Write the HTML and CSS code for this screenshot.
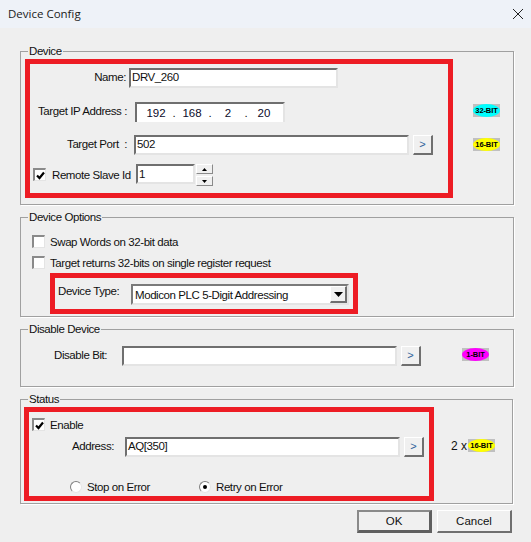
FILE: index.html
```html
<!DOCTYPE html>
<html lang="en">
<head>
<meta charset="utf-8">
<title>Device Config</title>
<link rel="stylesheet" href="styles.css">
</head>
<body>
<div class="dialog">
  <header class="titlebar">
    <span class="title">Device Config</span>
    <svg class="close" width="12" height="12" viewBox="0 0 12 12"><path d="M1 1L11 11M11 1L1 11" stroke="#222" stroke-width="1" fill="none"/></svg>
  </header>
  <main class="content">
    <section class="group group-device">
      <span class="legend">Device</span>
      <div class="row row-name">
        <span class="label label-name">Name:</span>
        <div class="field field-name">DRV_260</div>
      </div>
      <div class="row row-ip">
        <span class="label label-ip">Target IP Address :</span>
        <div class="ip">
          <span class="octet">192</span><span class="dot">.</span>
          <span class="octet">168</span><span class="dot">.</span>
          <span class="octet">2</span><span class="dot">.</span>
          <span class="octet">20</span>
        </div>
        <div class="badge badge-cyan badge-ip"><span class="oval">32-BIT</span></div>
      </div>
      <div class="row row-port">
        <span class="label label-port">Target Port &nbsp;:</span>
        <div class="field field-port">502</div>
        <div class="btn-small">&gt;</div>
        <div class="badge badge-yellow badge-port"><span class="oval">16-BIT</span></div>
      </div>
      <div class="row row-slave">
        <span class="check is-checked"><svg width="9" height="9" viewBox="0 0 9 9"><path d="M1 4.5L3.5 7L8 1.5" stroke="#000" stroke-width="2.2" fill="none"/></svg></span>
        <span class="check-label label-slave">Remote Slave Id</span>
        <div class="field field-slave">1</div>
        <div class="spinner">
          <div class="spin"><svg width="5" height="3" viewBox="0 0 5 3"><path d="M2.5 0L5 3H0Z" fill="#000"/></svg></div>
          <div class="spin"><svg width="5" height="3" viewBox="0 0 5 3"><path d="M0 0H5L2.5 3Z" fill="#000"/></svg></div>
        </div>
      </div>
    </section>

    <section class="group group-options">
      <span class="legend">Device Options</span>
      <div class="row row-check">
        <span class="check"></span>
        <span class="check-label">Swap Words on 32-bit data</span>
      </div>
      <div class="row row-check row-check-2">
        <span class="check"></span>
        <span class="check-label">Target returns 32-bits on single register request</span>
      </div>
      <div class="row row-type">
        <span class="label label-type">Device Type:</span>
        <div class="select">
          <span class="select-text">Modicon PLC 5-Digit Addressing</span>
          <div class="select-arrow"><svg width="9" height="5" viewBox="0 0 9 5"><path d="M0 0H9L4.5 5Z" fill="#000"/></svg></div>
        </div>
      </div>
    </section>

    <section class="group group-disable">
      <span class="legend">Disable Device</span>
      <div class="row row-disable">
        <span class="label label-disable">Disable Bit:</span>
        <div class="field field-wide"></div>
        <div class="btn-small">&gt;</div>
        <div class="badge badge-magenta badge-disable"><span class="oval">1-BIT</span></div>
      </div>
    </section>

    <section class="group group-status">
      <span class="legend">Status</span>
      <div class="row row-enable">
        <span class="check is-checked"><svg width="9" height="9" viewBox="0 0 9 9"><path d="M1 4.5L3.5 7L8 1.5" stroke="#000" stroke-width="2.2" fill="none"/></svg></span>
        <span class="check-label">Enable</span>
      </div>
      <div class="row row-address">
        <span class="label label-address">Address:</span>
        <div class="field field-wide">AQ[350]</div>
        <div class="btn-small">&gt;</div>
        <span class="times">2 x</span>
        <div class="badge badge-yellow badge-address"><span class="oval">16-BIT</span></div>
      </div>
      <div class="row row-radio">
        <span class="radio"></span>
        <span class="radio-label label-stop">Stop on Error</span>
        <span class="radio is-on"></span>
        <span class="radio-label">Retry on Error</span>
      </div>
    </section>

    <footer class="actions">
      <div class="btn btn-default">OK</div>
      <div class="btn">Cancel</div>
    </footer>
  </main>
  <div class="mark mark-device"></div>
  <div class="mark mark-type"></div>
  <div class="mark mark-status"></div>
</div>
</body>
</html>
```
FILE: styles.css
```css
* { box-sizing: border-box; }
html, body { margin: 0; padding: 0; }
body { width: 531px; height: 542px; overflow: hidden; background: #f0f0f0; }

.dialog {
  position: relative;
  width: 531px;
  height: 542px;
  background: #efefef;
  color: #111;
  font-family: "Liberation Sans", Arial, sans-serif;
  font-size: 11.5px;
  letter-spacing: -0.42px;
  line-height: 14px;
  overflow: hidden;
}

.titlebar {
  height: 28px;
  background: #eef2f8;
  display: flex;
  align-items: center;
  justify-content: space-between;
  padding: 0 7px 0 8px;
}
.title { font-family: "Open Sans", sans-serif; font-size: 11.5px; letter-spacing: 0; color: #1a1a1a; }
.close { display: block; }

.content { padding: 23px 0 0 20px; }

.group {
  position: relative;
  width: 494px;
  border: 1px solid #a0a0a0;
  box-shadow: 1px 1px 0 #fff;
  margin-bottom: 12px;
}
.group-device { height: 154px; padding-top: 16px; }
.group-options { height: 100px; padding-top: 17px; }
.group-disable { height: 58px; padding-top: 16px; }
.group-status { height: 105px; width: 493px; padding-top: 18px; margin-bottom: 6px; }

.legend {
  position: absolute;
  left: 7px;
  top: -8px;
  padding: 0 1px;
  background: #efefef;
}

.row { display: flex; align-items: flex-start; }
.label { text-align: right; padding-top: 2px; flex: none; white-space: nowrap; }
.check-label, .radio-label { flex: none; white-space: nowrap; }

.row-name { height: 20px; }
.label-name { width: 105px; margin-right: 3px; }
.field-name { width: 209px; }

.row-ip { height: 20px; margin-top: 14px; padding-right: 13px; }
.label-ip { width: 106px; margin-right: 8px; }

.row-port { height: 20px; margin-top: 13px; padding-right: 13px; }
.label-port { width: 106px; margin-right: 7px; }
.field-port { width: 275px; margin-right: 4px; }

.row-slave { height: 23px; margin-top: 9px; padding-left: 12px; }
.label-slave { width: 84px; margin-left: 6px; padding-top: 4px; }
.row-slave .check { margin-top: 4px; }
.field-slave { width: 59px; height: 22px; margin-right: 1px; padding-top: 1px; }

.field {
  height: 20px;
  background: #fff;
  border-style: solid;
  border-width: 2px 2px 2px 2px;
  border-color: #6f6f6f #e4e4e4 #e4e4e4 #6f6f6f;
  padding: 0 1px;
  line-height: 15px;
  flex: none;
}
.field-slave { padding-top: 1px; }
.field-wide { width: 275px; margin-right: 4px; }

.ip {
  width: 150px;
  height: 20px;
  background: #fff;
  border-style: solid;
  border-width: 2px 2px 0 2px;
  border-color: #6f6f6f #e4e4e4 #e4e4e4 #6f6f6f;
  display: flex;
  justify-content: space-between;
  padding: 2px 8px 0 8px;
  flex: none;
}
.octet { width: 22px; text-align: center; color: #0a0a2a; letter-spacing: 0; }
.dot { width: 14px; text-align: center; }

.btn-small {
  width: 20px;
  height: 20px;
  flex: none;
  background: #f0f0f0;
  border-style: solid;
  border-width: 1px 2px 2px 1px;
  border-color: #fff #6f6f6f #6f6f6f #fff;
  text-align: center;
  line-height: 17px;
  color: #2f5f9a;
  font-size: 11px;
  letter-spacing: 0;
}

.spinner { display: flex; flex-direction: column; gap: 2px; }
.spin {
  width: 17px;
  height: 10px;
  border-style: solid;
  border-width: 1px;
  border-color: #fff #8a8a8a #8a8a8a #fff;
  background: #f0f0f0;
  display: flex;
  align-items: center;
  justify-content: center;
}
.spin svg { display: block; }

.check {
  width: 13px;
  height: 13px;
  flex: none;
  background: #fff;
  border-style: solid;
  border-width: 2px 1px 1px 2px;
  border-color: #8a8a8a #e4e4e4 #e4e4e4 #8a8a8a;
  display: flex;
  align-items: center;
  justify-content: center;
}
.check svg { display: block; }

.row-check { height: 13px; padding-left: 11px; gap: 5px; }
.row-check-2 { margin-top: 8px; }

.row-type { height: 21px; margin-top: 15px; padding-left: 37px; }
.label-type { width: 73px; text-align: left; padding-top: 0; }
.select {
  width: 218px;
  height: 21px;
  background: #fff;
  border-style: solid;
  border-width: 2px;
  border-color: #7a7a7a #e4e4e4 #e4e4e4 #7a7a7a;
  display: flex;
  align-items: center;
  justify-content: space-between;
  padding-left: 2px;
}
.select-arrow {
  width: 17px;
  height: 17px;
  background: #f0f0f0;
  border-style: solid;
  border-width: 1px 2px 2px 1px;
  border-color: #fff #6f6f6f #6f6f6f #fff;
  display: flex;
  align-items: center;
  justify-content: center;
}
.select-arrow svg { display: block; }

.row-disable { height: 20px; padding-left: 33px; padding-right: 24px; }
.label-disable { width: 68px; text-align: left; }

.row-enable { height: 13px; padding-left: 11px; gap: 5px; }
.row-address { height: 20px; margin-top: 6px; padding-left: 51px; }
.label-address { width: 53px; text-align: left; }
.times { margin-left: 27px; margin-right: 4px; padding-top: 2px; width: 13px; font-size: 12px; letter-spacing: 0; white-space: nowrap; }
.row-radio { height: 12px; margin-top: 24px; padding-left: 49px; }

.radio {
  position: relative;
  width: 12px;
  height: 12px;
  flex: none;
  border-radius: 50%;
  background: #fff;
  border: 1px solid;
  border-color: #808080 #e6e6e6 #e6e6e6 #808080;
}
.radio.is-on::after {
  content: "";
  position: absolute;
  left: 3px;
  top: 3px;
  width: 4px;
  height: 4px;
  border-radius: 50%;
  background: #000;
}
.radio-label { margin-left: 5px; line-height: 12px; }
.label-stop { width: 112px; }

.badge {
  width: 27px;
  height: 13px;
  flex: none;
  background: #c0c0c0;
  margin-left: auto;
}
.badge .oval {
  display: block;
  width: 100%;
  height: 100%;
  border-radius: 50%;
  font-family: "Liberation Sans", sans-serif;
  font-size: 7.5px;
  font-weight: 700;
  letter-spacing: -0.1px;
  line-height: 13px;
  text-align: center;
  color: #000;
  white-space: nowrap;
}
.badge-cyan .oval { background: #00ffff; }
.badge-yellow .oval { background: #ffff00; }
.badge-magenta .oval { background: #ff00ff; }
.badge-ip { margin-top: 2px; }
.badge-port { margin-top: 3px; }
.badge-disable { margin-top: 2px; }
.badge-address { margin-left: 0; margin-top: 2px; }

.actions { display: flex; justify-content: flex-end; gap: 5px; width: 492px; }
.btn {
  width: 75px;
  height: 23px;
  background: #f0f0f0;
  border-style: solid;
  border-width: 1px 2px 2px 1px;
  border-color: #fff #6f6f6f #6f6f6f #fff;
  text-align: center;
  line-height: 20px;
  letter-spacing: 0;
}
.btn-default {
  border-width: 2px 3px 3px 2px;
  border-color: #8a8a8a #5f5f5f #5f5f5f #8a8a8a;
  line-height: 18px;
}

.mark {
  position: absolute;
  border: 5px solid #ed1c24;
}
.mark-device { left: 25px; top: 59px; width: 428px; height: 139px; }
.mark-type { left: 50px; top: 273px; width: 308px; height: 41px; }
.mark-status { left: 24px; top: 407px; width: 410px; height: 94px; }
```
